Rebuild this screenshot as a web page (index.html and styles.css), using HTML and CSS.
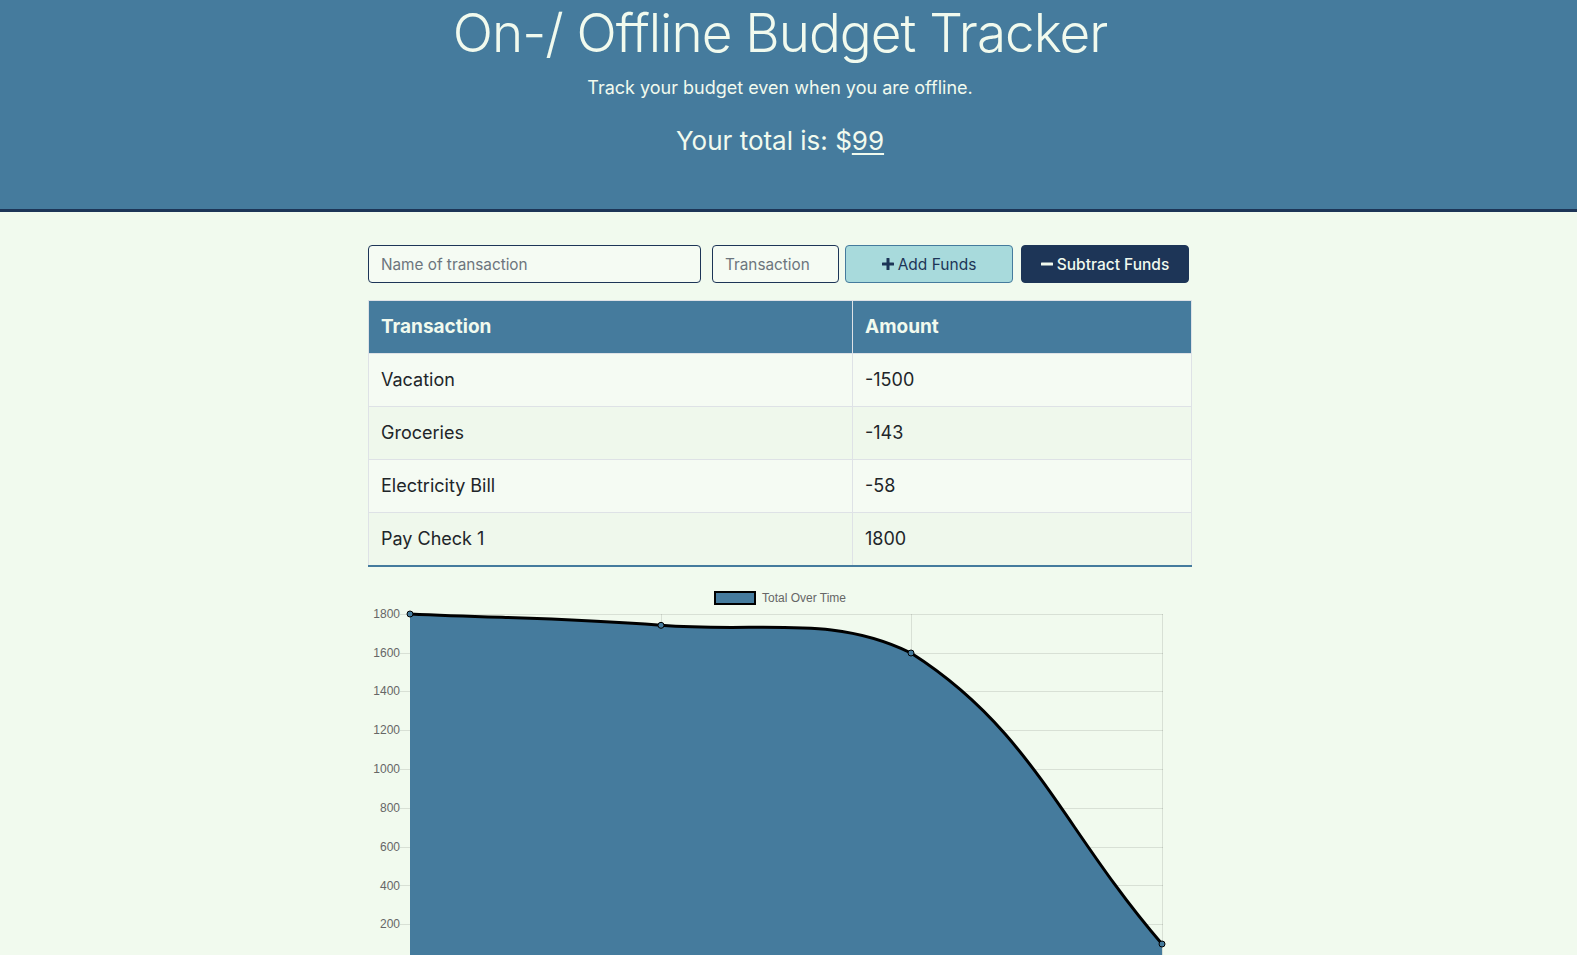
FILE: index.html
```html
<!DOCTYPE html>
<html lang="en">
<head>
<meta charset="utf-8">
<title>Budget Tracker</title>
<link rel="stylesheet" href="styles.css">
</head>
<body>
<header class="hero">
  <h1 class="title">On-/ Offline Budget Tracker</h1>
  <p class="lead">Track your budget even when you are offline.</p>
  <h3 class="total">Your total is: $<span class="total-amount">99</span></h3>
</header>
<main class="page">
  <div class="container">
    <form class="entry">
      <input class="field field-name" type="text" placeholder="Name of transaction">
      <input class="field field-amount" type="number" placeholder="Transaction">
      <button type="button" class="btn btn-add"><svg class="icon" viewBox="0 0 12 12" width="12" height="12"><rect x="4.5" y="0" width="3" height="12" rx="0.6"/><rect x="0" y="4.5" width="12" height="3" rx="0.6"/></svg>Add Funds</button>
      <button type="button" class="btn btn-sub"><svg class="icon" viewBox="0 0 12 12" width="12" height="12"><rect x="0" y="4.5" width="12" height="3" rx="0.6"/></svg>Subtract Funds</button>
    </form>
    <table class="ledger">
      <thead>
        <tr><th class="col-name">Transaction</th><th class="col-amount">Amount</th></tr>
      </thead>
      <tbody>
        <tr><td>Vacation</td><td>-1500</td></tr>
        <tr><td>Groceries</td><td>-143</td></tr>
        <tr><td>Electricity Bill</td><td>-58</td></tr>
        <tr><td>Pay Check 1</td><td>1800</td></tr>
      </tbody>
    </table>
    <svg class="chart" viewBox="368 575 824 380" width="824" height="380">
      <g class="legend">
        <rect x="715" y="592" width="40" height="12" fill="#457b9d" stroke="#000" stroke-width="2"/>
        <text x="762" y="602">Total Over Time</text>
      </g>
      <g class="grid" stroke="rgba(0,0,0,0.1)" stroke-width="1">
        <line x1="400" y1="614.5" x2="1163" y2="614.5"/>
        <line x1="400" y1="653.5" x2="1163" y2="653.5"/>
        <line x1="400" y1="691.5" x2="1163" y2="691.5"/>
        <line x1="400" y1="730.5" x2="1163" y2="730.5"/>
        <line x1="400" y1="769.5" x2="1163" y2="769.5"/>
        <line x1="400" y1="808.5" x2="1163" y2="808.5"/>
        <line x1="400" y1="847.5" x2="1163" y2="847.5"/>
        <line x1="400" y1="885.5" x2="1163" y2="885.5"/>
        <line x1="400" y1="924.5" x2="1163" y2="924.5"/>
        <line x1="661.5" y1="614" x2="661.5" y2="960"/>
        <line x1="911.5" y1="614" x2="911.5" y2="960"/>
        <line x1="1162.5" y1="614" x2="1162.5" y2="960"/>
      </g>
      <line x1="410.5" y1="614" x2="410.5" y2="960" stroke="rgba(0,0,0,0.25)" stroke-width="1"/>
      <g class="ylabels">
        <text x="400" y="618">1800</text>
        <text x="400" y="657">1600</text>
        <text x="400" y="695">1400</text>
        <text x="400" y="734">1200</text>
        <text x="400" y="773">1000</text>
        <text x="400" y="812">800</text>
        <text x="400" y="851">600</text>
        <text x="400" y="890">400</text>
        <text x="400" y="928">200</text>
      </g>
      <path class="area" d="M410,614 C510.4,618.5 560.85,617.5 661,625.3 C761.25,633.1 831.7,614 911,653 C1032.1,730.1 1061.6,827.6 1162,944 L1162,963 L410,963 Z"/>
      <path class="line" d="M410,614 C510.4,618.5 560.85,617.5 661,625.3 C761.25,633.1 831.7,614 911,653 C1032.1,730.1 1061.6,827.6 1162,944"/>
      <g class="points">
        <circle cx="410" cy="614" r="3"/>
        <circle cx="661" cy="625.3" r="3"/>
        <circle cx="911" cy="653" r="3"/>
        <circle cx="1162" cy="944" r="3"/>
      </g>
    </svg>
  </div>
</main>
</body>
</html>
```

FILE: styles.css
```css
html, body {
  margin: 0;
  height: 955px;
  overflow: hidden;
}

body {
  background: #f1faee;
  color: #212529;
  font-family: Inter, "Noto Sans", "Liberation Sans", sans-serif;
}

.hero {
  box-sizing: border-box;
  height: 212px;
  padding: 0 17px 0 0;
  background: #457b9d;
  border-bottom: 3px solid #1d3557;
  color: #f1faee;
  text-align: center;
  overflow: hidden;
}

.title {
  margin: 0 0 6px;
  font-size: 53px;
  font-weight: 350;
  line-height: 67px;
  letter-spacing: -1px;
}

.lead {
  margin: 0 0 21px;
  font-size: 18px;
  font-weight: 400;
  line-height: 30px;
}

.total {
  margin: 0;
  font-size: 26px;
  font-weight: 400;
  line-height: 34px;
}

.total-amount {
  text-decoration: underline;
  text-underline-offset: 3px;
  text-decoration-thickness: 2px;
}

.page {
  padding-right: 17px;
}

.container {
  width: 824px;
  margin: 0 auto;
  padding-top: 33px;
}

.entry {
  display: flex;
  align-items: stretch;
  height: 38px;
  margin: 0 0 17px;
}

.field {
  box-sizing: border-box;
  height: 38px;
  padding: 6px 12px;
  border: 1px solid #1d3557;
  border-radius: 4px;
  background: #f5fbf3;
  color: #495057;
  font-family: inherit;
  font-size: 15.3px;
  outline: none;
}

.field::placeholder {
  color: #6c757d;
}

.field-name {
  width: 333px;
}

.field-amount {
  width: 127px;
  margin-left: 11px;
  -moz-appearance: textfield;
}

.field-amount::-webkit-inner-spin-button,
.field-amount::-webkit-outer-spin-button {
  -webkit-appearance: none;
  margin: 0;
}

.btn {
  box-sizing: border-box;
  display: flex;
  align-items: center;
  justify-content: center;
  gap: 4px;
  width: 168px;
  height: 38px;
  padding: 0 12px;
  border: 1px solid transparent;
  border-radius: 4px;
  font-family: inherit;
  font-size: 15.5px;
  cursor: pointer;
}

.btn-add {
  margin-left: 6px;
  background: #a8dadc;
  border-color: #457b9d;
  color: #1d3557;
}

.btn-sub {
  margin-left: 8px;
  background: #1d3557;
  border-color: #1d3557;
  color: #f1faee;
  font-weight: 500;
}

.icon {
  fill: currentColor;
  flex: none;
}

.ledger {
  width: 824px;
  border-collapse: collapse;
  border: 1px solid #dee2e6;
  font-size: 18px;
  line-height: 28px;
  margin-bottom: 8px;
}

.ledger th,
.ledger td {
  padding: 12px;
  text-align: left;
  border: 1px solid #dee2e6;
}

.ledger th {
  background: #457b9d;
  color: #f1faee;
  font-size: 19px;
  font-weight: 700;
  border-bottom: 1px solid #dee2e6;
}

.col-name {
  width: 459px;
}

.ledger tbody tr:nth-child(odd) td {
  background: #f5fbf3;
}

.ledger tbody tr:nth-child(even) td {
  background: #eff8ec;
}

.ledger tbody tr:last-child td {
  border-bottom: 2px solid #457b9d;
}

.chart {
  display: block;
}

.chart text {
  font-family: "Liberation Sans", Arial, sans-serif;
  font-size: 12px;
  fill: #666;
}

.ylabels text {
  text-anchor: end;
}

.area {
  fill: #457b9d;
}

.line {
  fill: none;
  stroke: #000;
  stroke-width: 3;
}

.points circle {
  fill: #457b9d;
  stroke: #000;
  stroke-width: 1;
}
```
